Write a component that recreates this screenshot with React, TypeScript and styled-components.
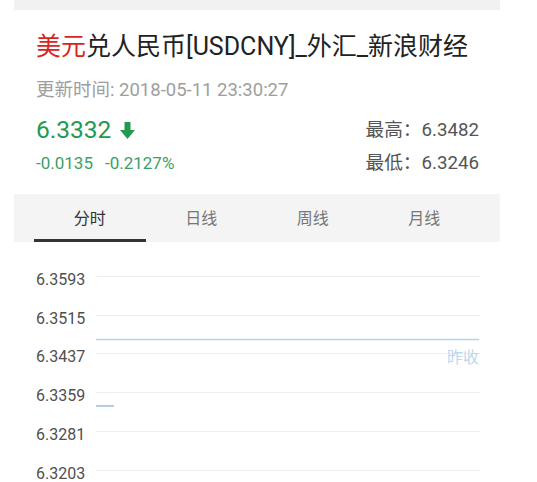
import React from "react";
import styled, { createGlobalStyle } from "styled-components";

const colors = {
  red: "#d8251f",
  title: "#222222",
  muted: "#9e9e9e",
  green: "#23994f",
  greenSoft: "#3a9f66",
  label: "#4f4f4f",
  tabBg: "#f4f4f4",
  grid: "#efefef",
  blue: "#b2d4ec",
};

const FONT = `"Roboto", "Noto Sans CJK SC", sans-serif`;

const GlobalStyle = createGlobalStyle`
  body {
    margin: 0;
    background: #fff;
    font-family: ${FONT};
  }
`;

const Page = styled.div`
  margin-left: 14px;
  width: 486px;
`;

const TopStrip = styled.div`
  height: 10px;
  background: #f1f1f1;
`;

const Header = styled.div`
  padding: 20px 21px 0 22px;
`;

const Title = styled.h1`
  margin: 0;
  font-size: 25px;
  line-height: 34px;
  font-weight: 400;
  color: ${colors.title};
  white-space: nowrap;
  span {
    color: ${colors.red};
  }
`;

const UpdateTime = styled.div`
  margin-top: 13px;
  font-size: 18.5px;
  line-height: 26px;
  color: ${colors.muted};
`;

const QuoteRow = styled.div`
  margin-top: 11px;
  display: flex;
  justify-content: space-between;
`;

const Column = styled.div`
  display: flex;
  flex-direction: column;
  align-items: ${(p: { end?: boolean }) => (p.end ? "flex-end" : "flex-start")};
`;

const Price = styled.div`
  display: flex;
  align-items: center;
  gap: 9px;
  font-size: 24.5px;
  line-height: 32px;
  color: ${colors.green};
`;

const Change = styled.div`
  margin-top: 4px;
  display: flex;
  gap: 12px;
  font-size: 17px;
  line-height: 26px;
  color: ${colors.greenSoft};
`;

const Stat = styled.div`
  font-size: 18.7px;
  line-height: ${(p: { tall?: boolean }) => (p.tall ? "32px" : "26px")};
  margin-top: ${(p: { tall?: boolean }) => (p.tall ? "0" : "4px")};
  color: #555;
`;

const TabBar = styled.div`
  margin-top: 18px;
  height: 48px;
  padding: 0 20px;
  background: ${colors.tabBg};
  display: grid;
  grid-template-columns: repeat(4, 1fr);
`;

const Tab = styled.div<{ active?: boolean }>`
  display: flex;
  align-items: center;
  justify-content: center;
  font-size: 16px;
  color: ${(p) => (p.active ? "#333" : "#777")};
  border-bottom: 3px solid ${(p) => (p.active ? "#333" : "transparent")};
`;

const Chart = styled.div`
  position: relative;
  margin-top: 18px;
  padding: 0 20px 0 22px;
`;

const Row = styled.div`
  height: 38.8px;
  display: flex;
  align-items: center;
`;

const AxisLabel = styled.div`
  width: 60px;
  font-size: 16px;
  color: ${colors.label};
`;

const GridLine = styled.div`
  flex: 1;
  height: 1px;
  margin-bottom: 6px;
  background: ${colors.grid};
`;

const Overlay = styled.svg`
  position: absolute;
  left: 82px;
  top: 0;
`;

const PrevClose = styled.div`
  position: absolute;
  right: 21px;
  top: 84px;
  font-size: 16px;
  color: #bcd8ec;
`;

const DownArrow = () => (
  <svg width="15" height="17" viewBox="0 0 15 17">
    <rect x="4.5" y="0" width="6" height="9" fill={colors.green} />
    <polygon points="0,8 15,8 7.5,17" fill={colors.green} />
  </svg>
);

const axis = ["6.3593", "6.3515", "6.3437", "6.3359", "6.3281", "6.3203"];
const tabs = ["分时", "日线", "周线", "月线"];

export default function App() {
  return (
    <Page>
      <GlobalStyle />
      <TopStrip />
      <Header>
        <Title>
          <span>美元</span>兑人民币[USDCNY]_外汇_新浪财经
        </Title>
        <UpdateTime>更新时间: 2018-05-11 23:30:27</UpdateTime>
        <QuoteRow>
          <Column>
            <Price>
              6.3332
              <DownArrow />
            </Price>
            <Change>
              <span>-0.0135</span>
              <span>-0.2127%</span>
            </Change>
          </Column>
          <Column end>
            <Stat tall>最高：6.3482</Stat>
            <Stat>最低：6.3246</Stat>
          </Column>
        </QuoteRow>
      </Header>
      <TabBar>
        {tabs.map((t, i) => (
          <Tab key={t} active={i === 0}>
            {t}
          </Tab>
        ))}
      </TabBar>
      <Chart>
        {axis.map((v) => (
          <Row key={v}>
            <AxisLabel>{v}</AxisLabel>
            <GridLine />
          </Row>
        ))}
        <Overlay width="384" height="233">
          <line x1="0" y1="79.5" x2="383" y2="79.5" stroke={colors.blue} strokeWidth="1.5" />
          <line x1="0" y1="146" x2="18" y2="146" stroke="#9cbfd8" strokeWidth="1.5" />
        </Overlay>
        <PrevClose>昨收</PrevClose>
      </Chart>
    </Page>
  );
}
